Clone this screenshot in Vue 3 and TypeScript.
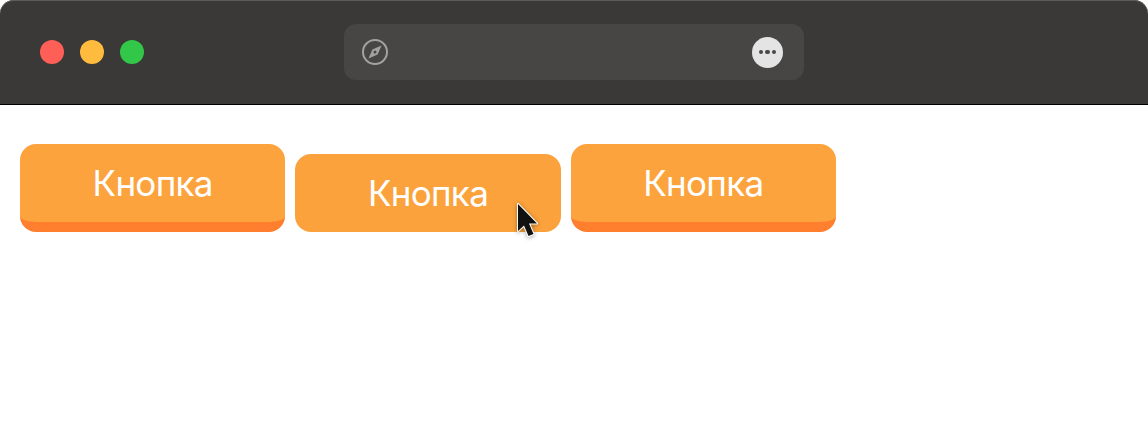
<script setup lang="ts">
const buttons = [
  { id: 1, pressed: false },
  { id: 2, pressed: true },
  { id: 3, pressed: false },
]
const lights = ['#ff5f57', '#febb3d', '#32c748']
</script>

<template>
  <div class="window">
    <header class="titlebar">
      <div class="lights">
        <span v-for="c in lights" :key="c" class="light" :style="{ background: c }"></span>
      </div>
      <div class="address">
        <svg class="compass" viewBox="0 0 28 28" width="28" height="28">
          <circle cx="14" cy="14" r="12" fill="none" stroke="#a3a2a1" stroke-width="2" />
          <path d="M20.5 7.5 L16.6 16.6 L7.5 20.5 L11.4 11.4 Z" fill="#a3a2a1" />
          <circle cx="14" cy="14" r="1.5" fill="#474644" />
        </svg>
        <span class="more">
          <i></i><i></i><i></i>
        </span>
      </div>
    </header>

    <main class="row">
      <button
        v-for="b in buttons"
        :key="b.id"
        class="btn"
        :class="{ pressed: b.pressed }"
      >
        Кнопка
      </button>
    </main>

    <svg class="cursor" viewBox="0 0 26 38" width="26" height="38">
      <path
        d="M3 2 V29 L9 23.5 L13.5 34 L18.5 32 L14 21.5 H22 Z"
        fill="#111"
        stroke="#fff"
        stroke-width="2"
        stroke-linejoin="round"
        paint-order="stroke"
      />
    </svg>
  </div>
</template>

<style scoped>
.window {
  position: relative;
  width: 1148px;
  height: 448px;
  overflow: hidden;
  background: #fff;
  font-family: Inter, "Noto Sans", sans-serif;
}
.titlebar {
  display: grid;
  grid-template-columns: 1fr 460px 1fr;
  align-items: center;
  height: 105px;
  box-sizing: border-box;
  background: #3a3937;
  box-shadow: inset 0 1px 0 #5e5d5c;
  border-bottom: 1px solid #000;
  border-radius: 14px 14px 0 0;
}
.lights {
  display: flex;
  gap: 16px;
  padding-left: 40px;
}
.light {
  width: 24px;
  height: 24px;
  border-radius: 50%;
}
.address {
  display: flex;
  align-items: center;
  justify-content: space-between;
  height: 56px;
  padding: 0 21px 0 17px;
  background: #474644;
  border-radius: 12px;
}
.compass {
  display: block;
}
.more {
  display: flex;
  align-items: center;
  justify-content: center;
  gap: 2px;
  width: 31px;
  height: 31px;
  border-radius: 50%;
  background: #e4e4e4;
}
.more i {
  width: 4.5px;
  height: 4.5px;
  border-radius: 50%;
  background: #4a4947;
}
.row {
  display: flex;
  align-items: flex-end;
  gap: 10px;
  padding: 39px 20px 0;
}
.btn {
  flex: 0 0 265.33px;
  height: 88px;
  padding: 0;
  box-sizing: border-box;
  border: none;
  border-bottom: 10px solid #ff7f2e;
  border-radius: 16px;
  background: #fca33d;
  color: #fff;
  font: inherit;
  font-size: 35px;
  font-weight: 420;
  letter-spacing: -0.7px;
}
.btn.pressed {
  height: 78px;
  border-bottom: 0;
  background: #fba23c;
}
.cursor {
  position: absolute;
  left: 515px;
  top: 202px;
  filter: drop-shadow(0 1px 2px rgba(0, 0, 0, 0.35));
}
</style>
